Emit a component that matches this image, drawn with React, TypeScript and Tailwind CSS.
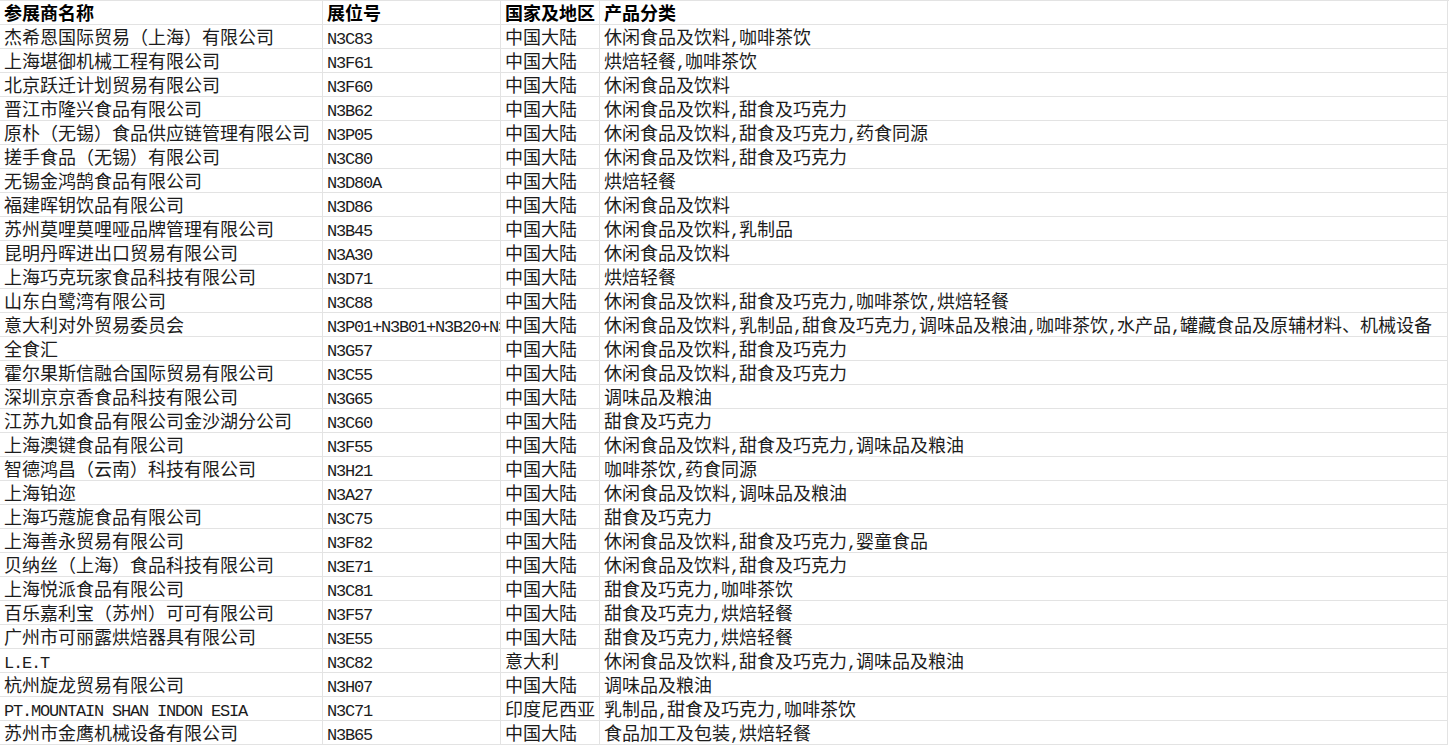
type Row = [string, string, string, string];

const rows: Row[] = [
  ["杰希恩国际贸易（上海）有限公司", "N3C83", "中国大陆", "休闲食品及饮料,咖啡茶饮"],
  ["上海堪御机械工程有限公司", "N3F61", "中国大陆", "烘焙轻餐,咖啡茶饮"],
  ["北京跃迁计划贸易有限公司", "N3F60", "中国大陆", "休闲食品及饮料"],
  ["晋江市隆兴食品有限公司", "N3B62", "中国大陆", "休闲食品及饮料,甜食及巧克力"],
  ["原朴（无锡）食品供应链管理有限公司", "N3P05", "中国大陆", "休闲食品及饮料,甜食及巧克力,药食同源"],
  ["搓手食品（无锡）有限公司", "N3C80", "中国大陆", "休闲食品及饮料,甜食及巧克力"],
  ["无锡金鸿鹄食品有限公司", "N3D80A", "中国大陆", "烘焙轻餐"],
  ["福建晖钥饮品有限公司", "N3D86", "中国大陆", "休闲食品及饮料"],
  ["苏州莫哩莫哩哑品牌管理有限公司", "N3B45", "中国大陆", "休闲食品及饮料,乳制品"],
  ["昆明丹晖进出口贸易有限公司", "N3A30", "中国大陆", "休闲食品及饮料"],
  ["上海巧克玩家食品科技有限公司", "N3D71", "中国大陆", "烘焙轻餐"],
  ["山东白鹭湾有限公司", "N3C88", "中国大陆", "休闲食品及饮料,甜食及巧克力,咖啡茶饮,烘焙轻餐"],
  ["意大利对外贸易委员会", "N3P01+N3B01+N3B20+N3B21", "中国大陆", "休闲食品及饮料,乳制品,甜食及巧克力,调味品及粮油,咖啡茶饮,水产品,罐藏食品及原辅材料、机械设备"],
  ["全食汇", "N3G57", "中国大陆", "休闲食品及饮料,甜食及巧克力"],
  ["霍尔果斯信融合国际贸易有限公司", "N3C55", "中国大陆", "休闲食品及饮料,甜食及巧克力"],
  ["深圳京京香食品科技有限公司", "N3G65", "中国大陆", "调味品及粮油"],
  ["江苏九如食品有限公司金沙湖分公司", "N3C60", "中国大陆", "甜食及巧克力"],
  ["上海澳键食品有限公司", "N3F55", "中国大陆", "休闲食品及饮料,甜食及巧克力,调味品及粮油"],
  ["智德鸿昌（云南）科技有限公司", "N3H21", "中国大陆", "咖啡茶饮,药食同源"],
  ["上海铂迩", "N3A27", "中国大陆", "休闲食品及饮料,调味品及粮油"],
  ["上海巧蔻旎食品有限公司", "N3C75", "中国大陆", "甜食及巧克力"],
  ["上海善永贸易有限公司", "N3F82", "中国大陆", "休闲食品及饮料,甜食及巧克力,婴童食品"],
  ["贝纳丝（上海）食品科技有限公司", "N3E71", "中国大陆", "休闲食品及饮料,甜食及巧克力"],
  ["上海悦派食品有限公司", "N3C81", "中国大陆", "甜食及巧克力,咖啡茶饮"],
  ["百乐嘉利宝（苏州）可可有限公司", "N3F57", "中国大陆", "甜食及巧克力,烘焙轻餐"],
  ["广州市可丽露烘焙器具有限公司", "N3E55", "中国大陆", "甜食及巧克力,烘焙轻餐"],
  ["L.E.T", "N3C82", "意大利", "休闲食品及饮料,甜食及巧克力,调味品及粮油"],
  ["杭州旋龙贸易有限公司", "N3H07", "中国大陆", "调味品及粮油"],
  ["PT.MOUNTAIN SHAN INDON ESIA", "N3C71", "印度尼西亚", "乳制品,甜食及巧克力,咖啡茶饮"],
  ["苏州市金鹰机械设备有限公司", "N3B65", "中国大陆", "食品加工及包装,烘焙轻餐"],
];

// latin runs get a monospace half-width font, like the sheet's SimSun
function Txt({ s }: { s: string }) {
  const parts = s.match(/[\x00-\x7F]+|[^\x00-\x7F]+/g) || [];
  return (
    <>
      {parts.map((p, i) =>
        /^[\x00-\x7F]/.test(p) ? (
          <span
            key={i}
            className="font-['Liberation_Mono',monospace] text-[17px] tracking-[-1.2px]"
          >
            {p}
          </span>
        ) : (
          <span key={i}>{p}</span>
        )
      )}
    </>
  );
}

function Cell({ s, bold, clip }: { s: string; bold?: boolean; clip?: boolean }) {
  return (
    <div
      className={
        "h-6 whitespace-nowrap border-b border-r border-[#e3e3e3] pl-1 leading-[23px] " +
        (clip ? "overflow-hidden " : "") +
        (bold ? "font-bold text-black" : "text-[#1c1c1c]")
      }
    >
      <Txt s={s} />
    </div>
  );
}

export default function App() {
  return (
    <div className="min-h-screen bg-white font-['Noto_Sans_CJK_SC',sans-serif] text-[18px]">
      <div className="grid grid-cols-[323px_178px_99px_848px] border-t border-[#e3e3e3]">
        {["参展商名称", "展位号", "国家及地区", "产品分类"].map((h) => (
          <Cell key={h} s={h} bold />
        ))}
        {rows.map((r, i) =>
          r.map((c, j) => <Cell key={i + "-" + j} s={c} clip={j === 1} />)
        )}
      </div>
    </div>
  );
}
